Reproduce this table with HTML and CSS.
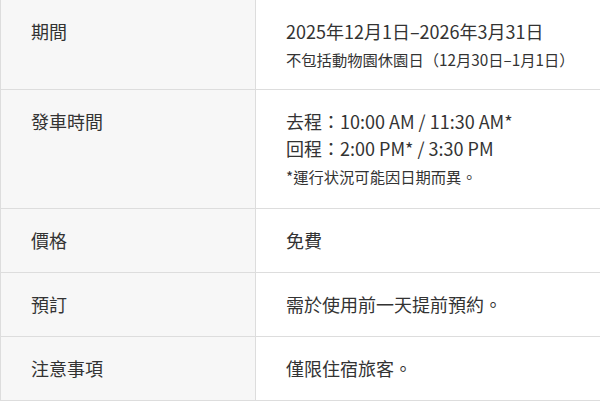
FILE: index.html
```html
<!DOCTYPE html>
<html lang="zh-Hant">
<head>
<meta charset="utf-8">
<link rel="stylesheet" href="styles.css">
</head>
<body>
<div class="info-table">
  <div class="row">
    <div class="label">期間</div>
    <div class="value">
      <div class="main">2025年12月1日–2026年3月31日</div>
      <div class="sub">不包括動物園休園日（12月30日–1月1日）</div>
    </div>
  </div>
  <div class="row">
    <div class="label">發車時間</div>
    <div class="value">
      <div class="main">去程：10:00 AM / 11:30 AM*</div>
      <div class="main">回程：2:00 PM* / 3:30 PM</div>
      <div class="note">*運行状況可能因日期而異。</div>
    </div>
  </div>
  <div class="row">
    <div class="label">價格</div>
    <div class="value"><div class="main">免費</div></div>
  </div>
  <div class="row">
    <div class="label">預訂</div>
    <div class="value"><div class="main">需於使用前一天提前預約。</div></div>
  </div>
  <div class="row">
    <div class="label">注意事項</div>
    <div class="value"><div class="main">僅限住宿旅客。</div></div>
  </div>
</div>
</body>
</html>
```

FILE: styles.css
```css
html, body {
  margin: 0;
  padding: 0;
  background: #ffffff;
}
body {
  font-family: "Noto Sans CJK TC", "Noto Sans", sans-serif;
  color: #333333;
}
.info-table {
  border-left: 1px solid #dddddd;
  width: 620px;
}
.row {
  display: grid;
  grid-template-columns: 255px 1fr;
  border-bottom: 1px solid #dddddd;
}
.label {
  background: #f7f7f7;
  border-right: 1px solid #dddddd;
  padding: 18px 30px;
  font-size: 18px;
  line-height: 27px;
}
.value {
  padding: 18px 30px;
}
.main {
  font-size: 18px;
  line-height: 27px;
}
.sub {
  font-size: 15.3px;
  line-height: 24px;
  margin-top: 2px;
}
.note {
  font-size: 15.3px;
  line-height: 24px;
  margin-top: 2px;
  margin-bottom: 2px;
}
```
